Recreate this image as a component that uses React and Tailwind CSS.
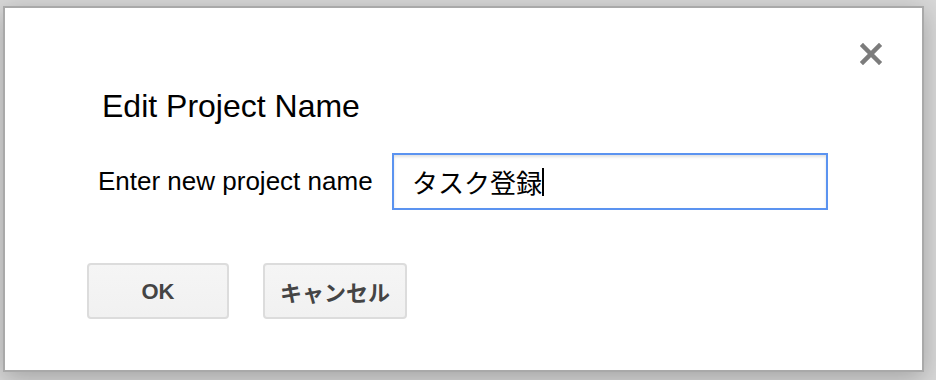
import React from "react";

export default function App() {
  const font = { fontFamily: '"Liberation Sans", Arial, "Noto Sans CJK JP", sans-serif' };
  return (
    <div className="w-[936px] h-[380px] bg-[#d8d8d8] pt-[6px] pl-[3px] overflow-hidden" style={font}>
      <div className="relative w-[921px] h-[366px] bg-white border-2 border-[#a9a9a9] shadow-[0_6px_24px_rgba(0,0,0,0.25)]">
        <button className="absolute left-[855px] top-[35px] w-[22px] h-[22px]" aria-label="close">
          <svg width="22" height="22" viewBox="0 0 22 22">
            <path d="M3 3 L19 19 M19 3 L3 19" stroke="#7c7c7c" strokeWidth="4.5" strokeLinecap="square" style={{ filter: "blur(0.5px)" }} />
          </svg>
        </button>
        <div className="pl-[82px] pt-[80px] flex flex-col">
          <h1 className="ml-[15px] text-[32px] leading-[37px] text-black font-normal">Edit Project Name</h1>
          <div className="mt-[28px] flex items-center">
            <label className="ml-[11px] w-[294px] text-[26px] leading-[30px] text-black -mt-[2px]">Enter new project name</label>
            <div className="w-[436px] h-[57px] border-2 border-[#5b93f0] bg-white shadow-[inset_0_2px_3px_rgba(0,0,0,0.12)] flex items-center pl-[18px]">
              <span className="text-[26px] leading-[30px] text-black" style={{ fontFamily: '"Noto Sans CJK JP", sans-serif' }}>タスク登録</span>
              <span className="w-[2px] h-[28px] bg-black" />
            </div>
          </div>
          <div className="mt-[53px] flex gap-[34px]">
            <button className="w-[142px] h-[56px] rounded-[4px] border-2 border-[#dcdcdc] bg-gradient-to-b from-[#f5f5f5] to-[#f1f1f1] text-[22px] font-bold text-[#444]" style={{ fontFamily: '"Liberation Sans", Arial, sans-serif' }}>
              OK
            </button>
            <button className="w-[144px] h-[56px] rounded-[4px] border-2 border-[#dcdcdc] bg-gradient-to-b from-[#f5f5f5] to-[#f1f1f1] text-[22px] font-bold text-[#444]" style={{ fontFamily: '"Noto Sans CJK JP", sans-serif' }}>
              キャンセル
            </button>
          </div>
        </div>
      </div>
    </div>
  );
}
